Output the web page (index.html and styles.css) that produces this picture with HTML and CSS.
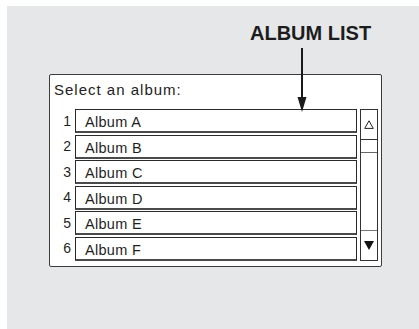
FILE: index.html
```html
<!DOCTYPE html>
<html>

<head>
  <link rel="stylesheet" href="styles.css">
</head>

<body>
  <div class="screen">
    <h2 class="callout">ALBUM LIST</h2>

    <svg class="pointer" width="10" height="64" viewBox="0 0 10 64">
      <rect x="4" y="0" width="2" height="52" fill="#1a1a1a" />
      <polygon points="0.5,49 9.5,49 5,64" fill="#1a1a1a" />
    </svg>

    <div class="panel">
      <div class="prompt">Select an album:</div>

      <div class="list">
        <ol class="rows">
          <li class="row"><span class="num">1</span><span class="item">Album A</span></li>
          <li class="row"><span class="num">2</span><span class="item">Album B</span></li>
          <li class="row"><span class="num">3</span><span class="item">Album C</span></li>
          <li class="row"><span class="num">4</span><span class="item">Album D</span></li>
          <li class="row"><span class="num">5</span><span class="item">Album E</span></li>
          <li class="row"><span class="num">6</span><span class="item">Album F</span></li>
        </ol>

        <div class="scrollbar">
          <div class="scroll-up">
            <svg width="10" height="9" viewBox="0 0 10 9">
              <polygon points="5,0.8 9.3,8.4 0.7,8.4" fill="none" stroke="#222" stroke-width="1" />
            </svg>
          </div>
          <div class="thumb"></div>
          <div class="track"></div>
          <div class="scroll-down">
            <svg width="10" height="9" viewBox="0 0 10 9">
              <polygon points="0,0 10,0 5,9" fill="#111" />
            </svg>
          </div>
        </div>
      </div>
    </div>
  </div>
</body>

</html>
```

FILE: styles.css
```css
body {
  margin: 0;
  background: white;
  font-family: 'Liberation Sans', Arial, Helvetica, sans-serif;
  color: #1f1f1f;
}

.screen {
  position: relative;
  margin: 6px 0 0 7px;
  width: 412px;
  height: 323px;
  background: #e6e7e8;
  overflow: hidden;
}

.callout {
  margin: 0 0 29px 243px;
  padding-top: 16px;
  font-size: 20px;
  line-height: 23px;
  font-weight: bold;
  color: #1d1d1d;
}

.pointer {
  position: absolute;
  left: 290px;
  top: 42px;
}

.panel {
  box-sizing: border-box;
  width: 333px;
  margin-left: 42px;
  padding: 6px 3px 5px 0;
  background: white;
  border: 1px solid #3c3c3c;
  border-radius: 2px;
}

.prompt {
  margin-left: 4px;
  font-size: 15px;
  line-height: 17px;
  letter-spacing: 1px;
  color: #222;
}

.list {
  display: flex;
  gap: 3px;
  margin-top: 11px;
}

.rows {
  flex: 1;
  display: flex;
  flex-direction: column;
  gap: 1.6px;
  margin: 0;
  padding: 0;
  list-style: none;
}

.row {
  display: flex;
  gap: 4px;
}

.num {
  width: 21px;
  padding-top: 3.5px;
  text-align: right;
  font-size: 14px;
  line-height: 17px;
}

.item {
  flex: 1;
  box-sizing: border-box;
  height: 24px;
  padding: 4px 0 0 9px;
  font-size: 14.5px;
  line-height: 17px;
  letter-spacing: 0.3px;
  border: 1px solid #2a2a2a;
  border-bottom: 2px solid #4a4a4a;
}

.scrollbar {
  box-sizing: border-box;
  width: 18px;
  display: flex;
  flex-direction: column;
  border: 1px solid #333;
}

.scroll-up,
.scroll-down {
  box-sizing: border-box;
  height: 30px;
  display: flex;
  align-items: center;
  justify-content: center;
}

.scroll-up {
  border-bottom: 1px solid #333;
}

.scroll-down {
  border-top: 1px solid #777;
}

.thumb {
  height: 13px;
  box-sizing: border-box;
  border-bottom: 1px solid #666;
}

.track {
  flex: 1;
}
```
